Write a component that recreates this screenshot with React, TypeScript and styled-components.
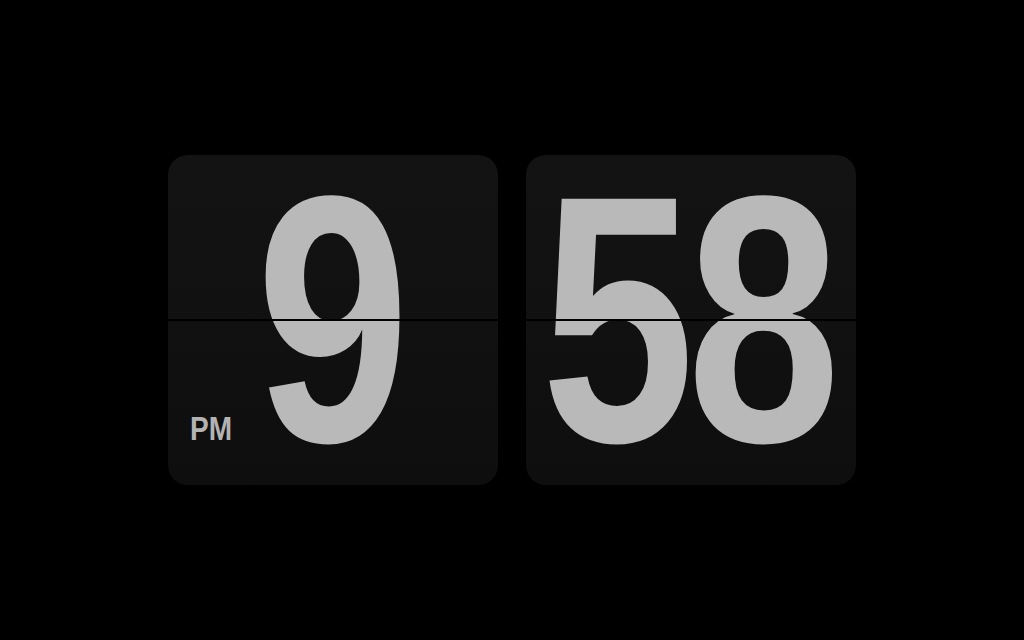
import styled, { createGlobalStyle } from 'styled-components';

const GlobalStyle = createGlobalStyle`
  html, body {
    margin: 0;
    padding: 0;
    background: #000;
    height: 100%;
  }
  #root {
    height: 100%;
  }
`;

const Screen = styled.div`
  width: 100vw;
  height: 100vh;
  background: #000;
  display: flex;
  align-items: center;
  justify-content: center;
  gap: 28px;
  font-family: "Liberation Sans", Arial, sans-serif;
`;

const Card = styled.div`
  position: relative;
  width: 330px;
  height: 330px;
  border-radius: 20px;
  background: linear-gradient(#131313 0%, #111 50%, #0e0e0e 100%);
  display: flex;
  align-items: center;
  justify-content: center;
`;

const Digits = styled.div`
  font-size: 352px;
  font-weight: 700;
  line-height: 0.9;
  color: #b9b9b9;
  letter-spacing: -10px;
  padding-right: 10px;
  transform: translateY(-1px) scaleX(0.785);
  white-space: nowrap;
  user-select: none;
`;

const Split = styled.div`
  position: absolute;
  left: 0;
  right: 0;
  top: 164px;
  height: 2px;
  background: #000;
`;

const Meridiem = styled.div`
  position: absolute;
  left: 22px;
  bottom: 40px;
  font-size: 33px;
  font-weight: 700;
  line-height: 1;
  color: #b3b3b3;
  transform: scaleX(0.85);
  transform-origin: left center;
`;

export default function App() {
  const hour = '9';
  const minutes = '58';
  return (
    <>
      <GlobalStyle />
      <Screen>
        <Card>
          <Digits>{hour}</Digits>
          <Split />
          <Meridiem>PM</Meridiem>
        </Card>
        <Card>
          <Digits>{minutes}</Digits>
          <Split />
        </Card>
      </Screen>
    </>
  );
}
